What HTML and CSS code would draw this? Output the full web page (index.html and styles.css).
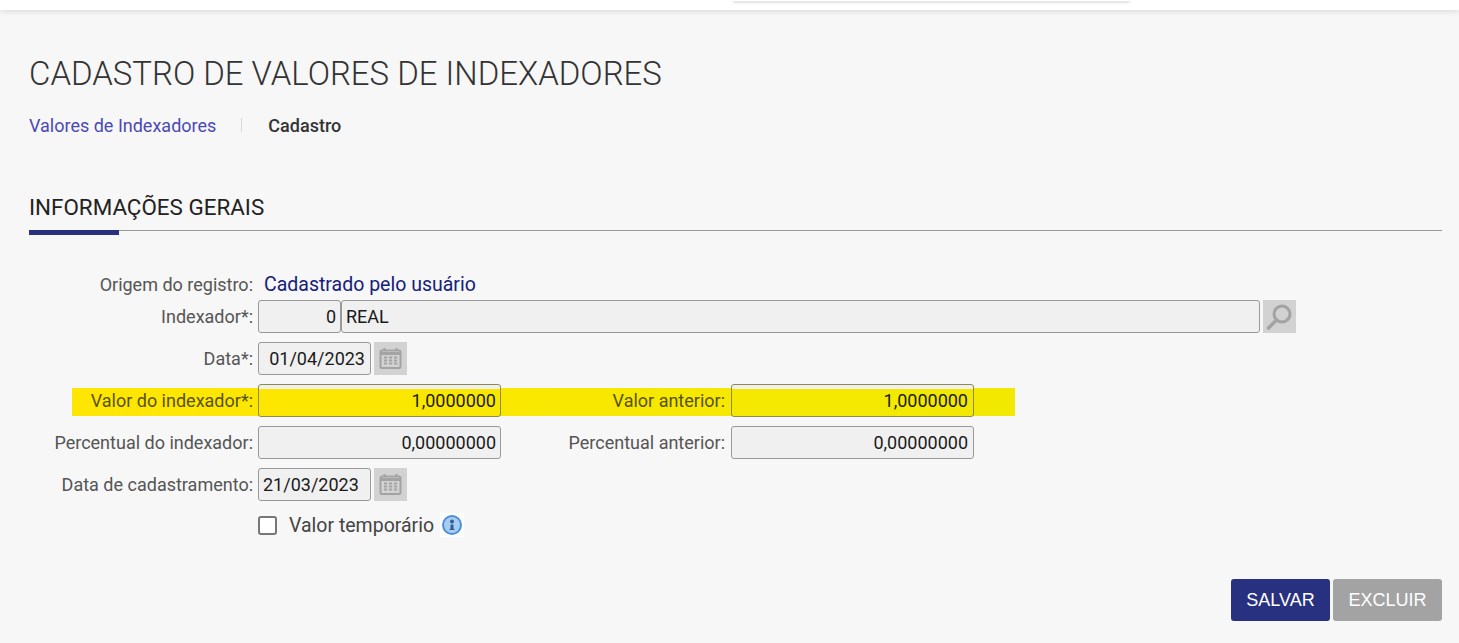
FILE: index.html
```html
<!DOCTYPE html>
<html lang="pt-BR">
<head>
<meta charset="utf-8">
<title>Cadastro de valores de indexadores</title>
<link rel="stylesheet" href="styles.css">
</head>
<body>
<header class="topbar"><div class="popup"></div></header>
<main class="page">
  <h1 class="title">CADASTRO DE VALORES DE INDEXADORES</h1>
  <nav class="crumbs">
    <a class="crumb-link" href="#">Valores de Indexadores</a>
    <span class="crumb-sep"></span>
    <span class="crumb-current">Cadastro</span>
  </nav>
  <section class="section">
    <h2 class="section-title">INFORMAÇÕES GERAIS</h2>
    <div class="form">
      <div class="row row-origin">
        <span class="label">Origem do registro:</span>
        <span class="origin-value">Cadastrado pelo usuário</span>
      </div>
      <div class="row">
        <span class="label">Indexador*:</span>
        <div class="field field-code">0</div>
        <div class="field field-name">REAL</div>
        <button class="icon-btn icon-btn-search" type="button" aria-label="Pesquisar">
          <svg class="soft" width="33" height="33" viewBox="0 0 33 33"><circle cx="19" cy="14" r="8" fill="none" stroke="#a3a3a3" stroke-width="3"/><path d="M13 20.5 5.500 28" fill="none" stroke="#a3a3a3" stroke-width="3.400" stroke-linecap="round"/></svg>
        </button>
      </div>
      <div class="row">
        <span class="label">Data*:</span>
        <div class="field field-date">01/04/2023</div>
        <button class="icon-btn" type="button" aria-label="Calendário">
          <svg class="soft" width="33" height="33" viewBox="0 0 33 33"><use href="#cal"/></svg>
        </button>
      </div>
      <div class="row row-mark">
        <div class="mark"></div>
        <span class="label">Valor do indexador*:</span>
        <div class="field field-num">1,0000000</div>
        <span class="label label-right">Valor anterior:</span>
        <div class="field field-num field-num-right">1,0000000</div>
      </div>
      <div class="row">
        <span class="label">Percentual do indexador:</span>
        <div class="field field-num">0,00000000</div>
        <span class="label label-right">Percentual anterior:</span>
        <div class="field field-num field-num-right">0,00000000</div>
      </div>
      <div class="row">
        <span class="label">Data de cadastramento:</span>
        <div class="field field-date field-date-left">21/03/2023</div>
        <button class="icon-btn" type="button" aria-label="Calendário">
          <svg class="soft" width="33" height="33" viewBox="0 0 33 33"><use href="#cal"/></svg>
        </button>
      </div>
      <div class="row row-check">
        <span class="label"></span>
        <label class="check"><input class="checkbox" type="checkbox"><span>Valor temporário</span></label>
        <span class="info">
          <svg width="24" height="24" viewBox="0 0 24 24"><circle cx="12" cy="12" r="9" fill="#a9cdee" stroke="#4a90d9" stroke-width="2"/><circle cx="12" cy="8.500" r="2" fill="#2c5f9e"/><path d="M10.500 11.500h3v4l1.500 1.500h-6l1.500-1.500z" fill="#2c5f9e"/></svg>
        </span>
      </div>
    </div>
  </section>
  <div class="actions">
    <button class="btn btn-primary" type="button">SALVAR</button>
    <button class="btn btn-muted" type="button">EXCLUIR</button>
  </div>
</main>
<svg class="defs" width="0" height="0">
  <defs>
    <g id="cal" fill="none" stroke="#a3a3a3">
      <rect x="6.500" y="8.500" width="20" height="17.500" rx="1.500" stroke-width="2"/>
      <path d="M6.500 11.500h20" stroke-width="3"/>
      <path d="M10.500 6v3M22.500 6v3" stroke-width="2"/>
      <path d="M10 15.500h3.200M15 15.500h3.200M20 15.500h3.200M10 18.500h3.200M15 18.500h3.200M20 18.500h3.200M10 21.500h3.200M15 21.500h3.200M20 21.500h3.200" stroke-width="2"/>
    </g>
  </defs>
</svg>
</body>
</html>
```
FILE: styles.css
```css
* { box-sizing: border-box; }
html, body { margin: 0; height: 643px; overflow: hidden; }
body {
  background: #f7f7f7;
  font-family: Roboto, "Liberation Sans", sans-serif;
  color: #444;
}
.topbar {
  height: 10px;
  background: #fff;
  box-shadow: 0 1px 6px rgba(0,0,0,.14);
  display: flex;
  padding-left: 733px;
}
.popup {
  width: 397px;
  height: 1px;
  background: #fff;
  box-shadow: 0 1px 3px rgba(0,0,0,.35);
}
.page { padding: 43px 17px 0 29px; }
.title {
  margin: 0;
  font-size: 32.950px;
  font-weight: 300;
  line-height: 42px;
  color: #333;
}
.crumbs {
  display: flex;
  align-items: center;
  height: 20px;
  margin-top: 20px;
  font-size: 18px;
}
.crumb-link { color: #4b48b5; text-decoration: none; }
.crumb-sep { width: 1px; height: 14px; background: #d9d9d9; margin: 0 26px 0 25px; }
.crumb-current { font-weight: 500; color: #333; }
.section { margin-top: 59px; }
.section-title {
  margin: 0;
  font-size: 22.4px;
  font-weight: 400;
  line-height: 26px;
  color: #222;
  height: 37px;
  border-bottom: 1px solid #999;
  position: relative;
}
.section-title::after {
  content: "";
  position: absolute;
  left: 0;
  bottom: -5px;
  width: 90px;
  height: 5px;
  background: #283080;
}
.form { margin-top: 41px; margin-left: -29px; }
.row {
  display: flex;
  align-items: center;
  height: 33px;
  margin-bottom: 9px;
  position: relative;
  font-size: 18px;
}
.row-origin { height: 24px; margin-bottom: 4px; }
.row-mark { z-index: 0; }
.label {
  width: 253px;
  flex: none;
  text-align: right;
  margin-right: 5px;
  color: #555;
  white-space: nowrap;
}
.label-right { width: 224px; margin-right: 6px; }
.origin-value { color: #14207c; font-size: 19.500px; margin-left: 6px; }
.field {
  height: 33px;
  flex: none;
  border: 1px solid #999;
  border-radius: 3px;
  background: #f0f0f0;
  color: #1a1a1a;
  font-size: 18px;
  line-height: 31px;
  padding: 0 4px;
  white-space: nowrap;
}
.field-code { width: 83px; text-align: right; }
.field-name { width: 919px; }
.field-date { width: 113px; text-align: right; padding-right: 5px; }
.field-date-left { text-align: left; }
.field-num { width: 243px; text-align: right; }
.field-num-right { padding-right: 5px; }
.icon-btn {
  width: 33px;
  height: 33px;
  flex: none;
  margin-left: 3px;
  padding: 0;
  border: 0;
  background: #d2d2d2;
  display: block;
}
.soft { filter: blur(.4px); display: block; }
.row-mark .label { color: #58530a; }
.row-mark .field {
  background: linear-gradient(#f0f0f0 4px, transparent 4px);
  border-color: #8d8a50;
}
.mark {
  position: absolute;
  left: 72px;
  top: 4px;
  width: 943px;
  height: 28px;
  background: linear-gradient(90deg, #ffe600, #f2e900);
  z-index: -1;
}
.row-check { height: 26px; margin: 11px 0 0; }
.check { display: flex; align-items: center; gap: 12px; color: #444; font-size: 19.500px; }
.checkbox {
  appearance: none;
  width: 19px;
  height: 19px;
  margin: 0;
  border: 2px solid #777;
  border-radius: 3px;
  background: #fff;
}
.info { width: 24px; height: 24px; background: #fff; margin-left: 6px; display: block; }
.actions {
  display: flex;
  justify-content: flex-end;
  gap: 3px;
  margin-top: 41px;
}
.btn {
  height: 42px;
  border: 0;
  border-radius: 3px;
  color: #fff;
  font-family: "Liberation Sans", Arial, sans-serif;
  font-size: 18px;
}
.btn-primary { width: 99px; background: #283080; }
.btn-muted { width: 109px; background: #a3a3a3; }
.defs { position: absolute; }
```
